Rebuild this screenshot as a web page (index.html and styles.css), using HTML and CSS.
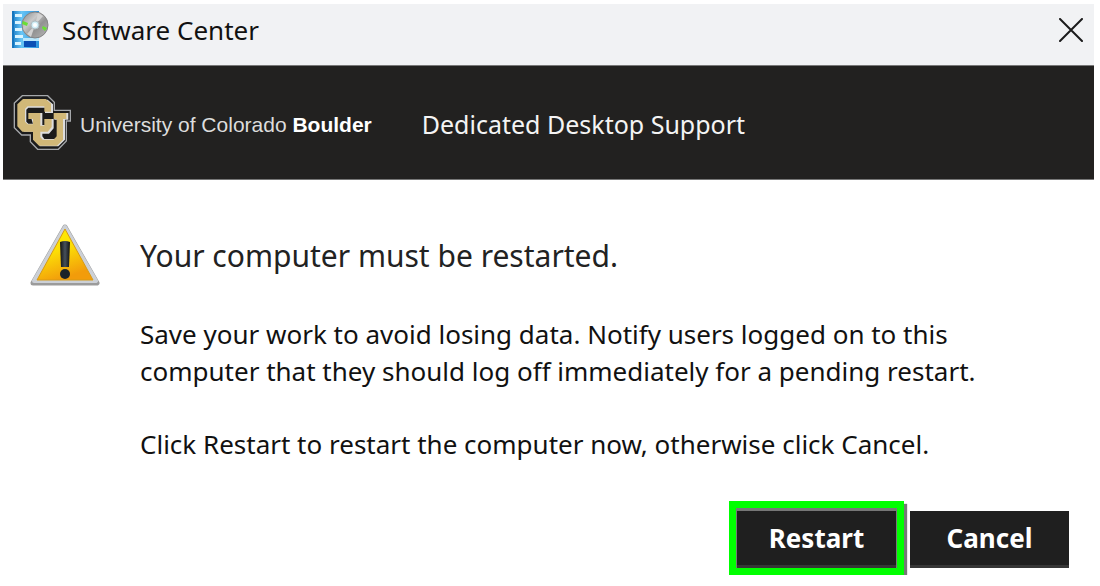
FILE: index.html
```html
<!DOCTYPE html>
<html lang="en">
<head>
<meta charset="utf-8">
<title>Software Center</title>
<link rel="stylesheet" href="styles.css">
</head>
<body>
<main class="window">
  <header class="titlebar">
    <svg class="app-icon" viewBox="0 0 38 40" aria-hidden="true">
      <defs>
        <linearGradient id="tower" x1="0" x2="1"><stop offset="0" stop-color="#1679c4"/><stop offset=".35" stop-color="#68c5f5"/><stop offset="1" stop-color="#2a91dc"/></linearGradient>
        <linearGradient id="disc" x1="0" y1="0" x2="1" y2="1"><stop offset="0" stop-color="#858585"/><stop offset=".35" stop-color="#c9c9c9"/><stop offset=".6" stop-color="#929292"/><stop offset="1" stop-color="#b9b9b9"/></linearGradient>
      </defs>
      <path fill="url(#tower)" d="M1 1h27v37H1z"/>
      <path fill="#1675bd" d="M1 1h2v37H1z"/>
      <path fill="#d9f4ff" d="M4 4h7v3H4zM4 11h6v3H4zM4 18h7v3H4zM4 25h8v3H4zM4 32h6v3H4z"/>
      <path fill="#b9e7fc" d="M12 28h16v3H12z"/>
      <path fill="#0b4fb5" d="M13 31h12v6H13z"/>
      <circle cx="24" cy="15" r="13" fill="url(#disc)" stroke="#858585"/>
      <path fill="#d2d2d2" d="M24 15 27 3l5 3zM24 15l-4 12-4-3z"/>
      <path fill="#69df35" d="m12 11 5 2-1 3-5-2zM32 16l4 2-2 3-3-3z"/>
      <circle cx="24" cy="15" r="4" fill="#d1eef7" stroke="#aebdc2"/>
      <circle cx="24" cy="15" r="2" fill="#fff"/>
    </svg>
    <h1 class="title">Software Center</h1>
    <button class="close" type="button" aria-label="Close">
      <svg viewBox="0 0 24 24" aria-hidden="true"><path d="M1 1l22 22M23 1 1 23"/></svg>
    </button>
  </header>

  <section class="banner">
    <svg class="logo" viewBox="10 20 180 180" aria-hidden="true">
      <path class="logo-rim" d="M38 28H114L134 48V72H182V104H170V164L146 189H84L62 166V146H36L14 124V50Z"/>
      <path class="logo-edge" d="M44 40H114L130 54V80H106V64H56L50 70V106L56 112H74V136H42Z"/>
      <path class="logo-edge" d="M60 80H98V116H106V98H132V126L118 142H98V150L104 158H134L146 148V100H134V80H176V100H166V160L146 180H90Z"/>
      <path class="logo-face" d="M40 38H108L124 52V76H104V60H54L46 68V106L54 114H72V136H38L23 120V54Z"/>
      <path class="logo-face" d="M56 80H92V118H104V98H126V122L114 136H92V152L99 160H132L141 150V98H132V80H170V98H160V160L142 178H88L70 160V98H56Z"/>
    </svg>
    <p class="university">University of Colorado <strong>Boulder</strong></p>
    <p class="department">Dedicated Desktop Support</p>
  </section>

  <section class="content">
    <svg class="warning" viewBox="0 0 72 66" aria-hidden="true">
      <defs>
        <linearGradient id="amber" x1="0" y1="0" x2=".4" y2="1"><stop offset="0" stop-color="#fff200"/><stop offset=".5" stop-color="#fcdd06"/><stop offset="1" stop-color="#f29c0b"/></linearGradient>
        <linearGradient id="mark" x1="0" x2="1"><stop offset="0" stop-color="#111"/><stop offset=".5" stop-color="#46505a"/><stop offset="1" stop-color="#111"/></linearGradient>
      </defs>
      <path d="M35 5 67 61H3Z" fill="#8e8e8e" stroke="#9b9b9b" stroke-width="5" stroke-linejoin="round"/>
      <path d="M35 5 66 59H4Z" fill="#ccd0d6" stroke="#ccd0d6" stroke-width="4" stroke-linejoin="round"/>
      <path d="M35 7 63 58H7Z" fill="url(#amber)" stroke="#d69a16"/>
      <path d="M30 20q5-2 10 0l-1 25h-8Z" fill="url(#mark)"/>
      <circle cx="35" cy="52" r="5" fill="#1d2329"/>
    </svg>
    <div class="message">
      <h2 class="heading">Your computer must be restarted.</h2>
      <p class="text">Save your work to avoid losing data. Notify users logged on to this computer that they should log off immediately for a pending restart.</p>
      <p class="text">Click Restart to restart the computer now, otherwise click Cancel.</p>
    </div>
  </section>

  <footer class="actions">
    <div class="highlight"><button class="button" type="button">Restart</button></div>
    <button class="button" type="button">Cancel</button>
  </footer>
</main>
</body>
</html>
```
FILE: styles.css
```css
* { box-sizing: border-box; }

body {
  margin: 0;
  background: #fff;
  color: #111;
  font-family: "Segoe UI", "Noto Sans", sans-serif;
}

h1, h2, p { margin: 0; font-weight: 400; }

.window { margin: 4px 6px 0 3px; }

.titlebar {
  display: flex;
  align-items: center;
  height: 62px;
  padding: 0 11px 10px 8px;
  background: #f1f2f4;
  border-bottom: 1px solid #777;
}

.app-icon { width: 38px; height: 40px; }

.title {
  margin-left: 13px;
  font-size: 26px;
  line-height: 36px;
}

.close {
  display: flex;
  margin-left: auto;
  padding: 0;
  border: 0;
  background: none;
}

.close svg {
  width: 24px;
  height: 24px;
  fill: none;
  stroke: #1b1b1b;
  stroke-width: 2;
  stroke-linecap: round;
}

.banner {
  display: flex;
  align-items: center;
  height: 114px;
  padding-left: 10px;
  border-bottom: 1px solid #777;
  background: #222120;
  color: #f4f4f4;
}

.logo { width: 60px; height: 60px; }
.logo-rim { fill: #1b1b1b; stroke: #a5a7aa; stroke-width: 4; }
.logo-edge { fill: #ddd; }
.logo-face { fill: #d1b878; }

.university {
  margin-left: 7px;
  padding-top: 4px;
  color: #ddd;
  font-family: "Helvetica Neue", "Liberation Sans", Arial, sans-serif;
  font-size: 21px;
  line-height: 28px;
}

.university strong { color: #fff; }

.department {
  margin-left: 50px;
  padding-top: 2px;
  font-size: 25px;
  line-height: 36px;
}

.content {
  display: flex;
  gap: 38px;
  padding: 42px 96px 0 27px;
}

.warning { flex: none; width: 72px; height: 66px; }

.message { padding-top: 12px; }

.heading {
  margin-bottom: 38px;
  color: #222;
  font-size: 30px;
  line-height: 44px;
}

.text {
  margin-bottom: 36px;
  font-size: 26px;
  line-height: 37px;
}

.actions {
  display: flex;
  justify-content: flex-end;
  align-items: baseline;
  gap: 6px;
  margin-top: 2px;
  padding-right: 25px;
}

.highlight {
  padding: 3px 1px 0;
  border: 7px solid #0f0;
  background: #777;
  box-shadow: 3px 3px 1px #777;
}

.button {
  display: block;
  width: 159px;
  height: 57px;
  padding: 0;
  border: 0;
  border-bottom: 3px solid #363636;
  background: #1f1f1f;
  color: #fff;
  font: 700 26px/36px "Segoe UI", "Noto Sans", sans-serif;
}
```
